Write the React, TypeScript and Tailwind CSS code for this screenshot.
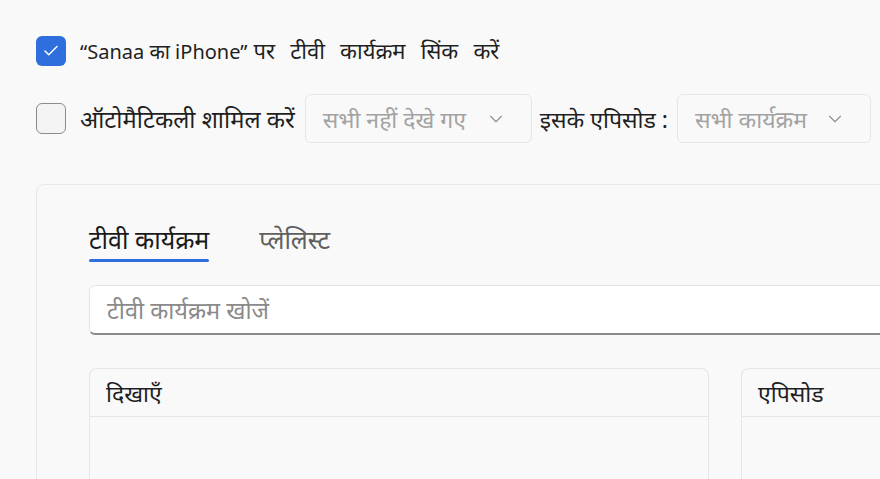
import { Check, ChevronDown } from 'lucide-react';

const font = { fontFamily: '"Noto Sans", "Noto Sans Devanagari", sans-serif' };

function Select({ label, width }: { label: string; width: string }) {
  return (
    <div className={`flex h-[49px] ${width} shrink-0 items-center justify-between rounded-md border border-[#e6e6e6] bg-[#f9f9f9] pl-[17px] pr-[24px]`}>
      <span className="text-[23px] leading-[30px] text-[#a3a3a3]">{label}</span>
      <ChevronDown className="h-[22px] w-[22px] text-[#8e8e8e]" strokeWidth={1.2} />
    </div>
  );
}

function ListBox({ title, width }: { title: string; width: string }) {
  return (
    <div className={`${width} shrink-0 rounded-t-lg border border-b-0 border-[#e6e6e6] bg-[#f9f9f9]`}>
      <div className="flex h-[48px] items-center border-b border-[#e6e6e6] px-4 text-[23px] leading-[30px] text-[#1f1f1f]">{title}</div>
      <div className="h-[80px]" />
    </div>
  );
}

export default function App() {
  return (
    <div className="h-[479px] w-[880px] overflow-hidden bg-[#f9f9f9] pl-9 pt-9" style={font}>
      <div className="flex h-[30px] items-center gap-[14px]">
        <div className="flex h-[30px] w-[30px] shrink-0 items-center justify-center rounded-md bg-[#2f6fdd]">
          <Check className="h-[18px] w-[18px] text-white" strokeWidth={2} />
        </div>
        <span className="whitespace-nowrap leading-[30px] text-[#1f1f1f]">
          <span className="text-[20px]">“Sanaa का iPhone”</span>
          <span className="ml-[6px] text-[22px] [word-spacing:9.5px]">पर टीवी कार्यक्रम सिंक करें</span>
        </span>
      </div>

      <div className="mt-[28px] flex items-center">
        <div className="h-[31px] w-[30px] shrink-0 rounded-md border border-[#8c8c8c] bg-[#f4f4f4]" />
        <span className="ml-[14px] mr-[10px] whitespace-nowrap text-[23.8px] leading-[30px] text-[#1f1f1f]">ऑटोमैटिकली शामिल करें</span>
        <Select label="सभी नहीं देखे गए" width="w-[227px]" />
        <span className="ml-[8px] mr-[9px] whitespace-nowrap text-[23px] leading-[30px] text-[#1f1f1f]">इसके एपिसोड :</span>
        <Select label="सभी कार्यक्रम" width="w-[194px]" />
      </div>

      <div className="mt-[41px] h-[400px] w-[900px] rounded-lg border border-[#e8e8e8] bg-[#f9f9f9] pl-[52px] pt-[39px]">
        <div className="flex gap-[50px] text-[25px] leading-[30px]">
          <div className="flex flex-col">
            <span className="text-[#1a1a1a]">टीवी कार्यक्रम</span>
            <div className="mt-[5px] h-[3px] rounded-full bg-[#2f6fdd]" />
          </div>
          <span className="text-[#5f5f5f]">प्लेलिस्ट</span>
        </div>

        <div className="mt-[23px] flex h-[50px] w-[820px] items-center rounded-md border border-[#e4e4e4] border-b-2 border-b-[#8a8a8a] bg-white px-[17px] text-[23.5px] leading-[30px] text-[#8a8a8a]">
          टीवी कार्यक्रम खोजें
        </div>

        <div className="mt-[33px] flex gap-[32px]">
          <ListBox title="दिखाएँ" width="w-[620px]" />
          <ListBox title="एपिसोड" width="w-[300px]" />
        </div>
      </div>
    </div>
  );
}
